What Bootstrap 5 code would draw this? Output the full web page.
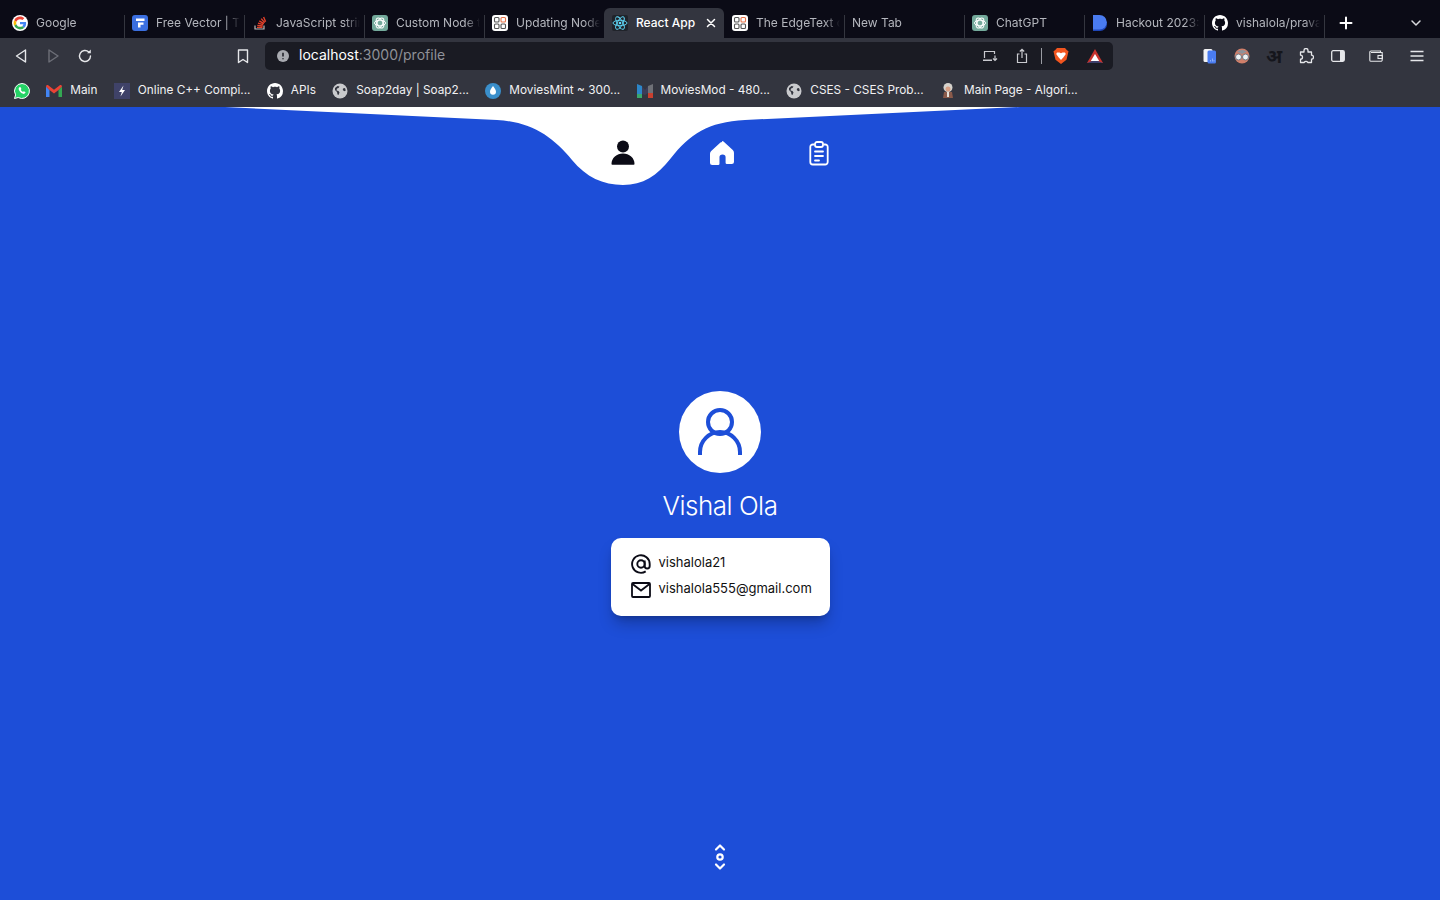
<!DOCTYPE html>
<html lang="en">
<head>
    <meta charset="UTF-8">
    <meta name="viewport" content="width=device-width, initial-scale=1.0">
    <title>React App</title>
    <link rel="stylesheet" href="https://cdn.jsdelivr.net/npm/bootstrap@5.3.0/dist/css/bootstrap.min.css">
    <style>
        html, body { height: 100%; overflow: hidden; }
        body { font-family: Inter, "Liberation Sans", sans-serif; background: #1d4ed8; }

        /* browser chrome */
        .tab-strip { height: 38px; background: #0b0b16; padding-left: 4px; }
        .tab-item { width: 120px; height: 30px; margin-top: 8px; padding: 0 4px 0 8px; font-size: 12px; color: #b4b6bd; position: relative; }
        .tab-item::after { content: ""; position: absolute; right: -1px; top: 7px; bottom: 0; width: 1px; background: #34363f; }
        .tab-item.tab-active { background: #33353f; color: #fff; font-weight: 500; border-radius: 6px 6px 0 0; }
        .tab-item.tab-active::after { display: none; }
        .tab-title { white-space: nowrap; overflow: hidden; flex: 1; -webkit-mask-image: linear-gradient(to right, #000 82%, transparent 100%); mask-image: linear-gradient(to right, #000 82%, transparent 100%); }
        .tab-active .tab-title { -webkit-mask-image: none; mask-image: none; }
        .tab-tools { color: #fff; }
        .tab-plus { width: 44px; }
        .tab-more { margin-left: 26px; width: 44px; }

        .tool-row { height: 36px; background: #33353f; padding-left: 5px; }
        .tool-slot { width: 32px; height: 28px; flex: none; }
        .tool-left { width: 260px; }
        .tool-mark { margin-left: auto; margin-right: 12px; width: 16px; }
        .addr-bar { width: 848px; height: 28px; background: #1a1b23; border-radius: 5px; color: #8f9198; font-size: 14px; line-height: 26px; padding-left: 12px; }
        .addr-text { margin-left: 2px; padding-bottom: 2px; }
        .addr-host { color: #fff; }
        .addr-sep { width: 1px; height: 16px; background: #9a9ca3; margin: 0 3px; }
        .addr-tools { margin-right: 2px; }
        .addr-last { margin-left: 2px; }
        .tool-right { margin-left: 81px; }
        .tool-hindi { font-family: "DejaVu Sans", "Noto Sans", sans-serif; font-size: 19px; font-weight: 700; color: #15161c; }
        .tool-wallet { margin-left: 6px; }
        .tool-menu { margin-left: 9px; }

        .mark-row { height: 33px; background: #33353f; padding-left: 14px; gap: 16.35px; font-size: 11.8px; color: #f1f1f3; }
        .mark-item { gap: 8px; white-space: nowrap; }

        /* page */
        .app-page { height: 793px; background: #1d4ed8; position: relative; color: #fff; }
        .wave-shape { position: absolute; left: 0; top: 0; }
        .app-nav { height: 78px; padding-top: 32px; padding-left: 2px; position: relative; gap: 70px; }
        .app-nav svg { display: block; }
        .avatar-circle { width: 82px; height: 82px; border-radius: 50%; background: #fff; }
        .profile-name { font-size: 26px; font-weight: 300; letter-spacing: -.02em; line-height: 34px; margin: 16px 0 15px; }
        .info-box { width: 219px; height: 78px; background: #fff; color: #111; border-radius: 10px; font-size: 13px; padding: 12px 0 0 20px; box-shadow: 0 10px 15px -3px rgba(0,0,0,.25), 0 4px 6px -4px rgba(0,0,0,.25); }
        .info-line { height: 26px; gap: 8px; }
        .info-icon { width: 20px; flex: none; margin-top: 2px; }
        .app-foot { height: 78px; padding-top: 21px; }
    </style>
</head>
<body>
    <svg width="0" height="0" class="position-absolute">
        <defs>
            <symbol id="fav-gpt" viewBox="0 0 16 16">
                <rect width="16" height="16" rx="3" fill="#74aa9c"/>
                <g fill="none" stroke="#fff" stroke-width="1">
                    <ellipse cx="8" cy="8" rx="5.5" ry="2.8"/>
                    <ellipse cx="8" cy="8" rx="5.5" ry="2.8" transform="rotate(60 8 8)"/>
                    <ellipse cx="8" cy="8" rx="5.5" ry="2.8" transform="rotate(120 8 8)"/>
                </g>
            </symbol>
            <symbol id="fav-grid" viewBox="0 0 16 16">
                <rect width="16" height="16" rx="3" fill="#fff"/>
                <g fill="none" stroke="#555" stroke-width="1.1">
                    <rect x="2.5" y="2.5" width="4.5" height="4.5" rx="1"/>
                    <rect x="2.5" y="9" width="4.5" height="4.5" rx="1"/>
                    <rect x="9" y="9" width="4.5" height="4.5" rx="1"/>
                </g>
                <rect x="9" y="2.5" width="4.5" height="4.5" rx="1" fill="none" stroke="#e8744a" stroke-width="1.1"/>
            </symbol>
            <symbol id="fav-github" viewBox="0 0 16 16">
                <path fill="#fff" d="M8 0C3.58 0 0 3.58 0 8c0 3.54 2.29 6.53 5.47 7.59.4.07.55-.17.55-.38 0-.19-.01-.82-.01-1.49-2.01.37-2.53-.49-2.69-.94-.09-.23-.48-.94-.82-1.13-.28-.15-.68-.52-.01-.53.63-.01 1.08.58 1.23.82.72 1.21 1.87.87 2.33.66.07-.52.28-.87.51-1.07-1.78-.2-3.64-.89-3.64-3.95 0-.87.31-1.59.82-2.15-.08-.2-.36-1.02.08-2.12 0 0 .67-.21 2.2.82.64-.18 1.32-.27 2-.27.68 0 1.36.09 2 .27 1.53-1.04 2.2-.82 2.2-.82.44 1.1.16 1.92.08 2.12.51.56.82 1.27.82 2.15 0 3.07-1.87 3.75-3.65 3.95.29.25.54.73.54 1.48 0 1.07-.01 1.93-.01 2.2 0 .21.15.46.55.38A8.013 8.013 0 0016 8c0-4.42-3.58-8-8-8z"/>
            </symbol>
            <symbol id="fav-globe" viewBox="0 0 16 16">
                <circle cx="8" cy="8" r="7.5" fill="#c9cacd"/>
                <path fill="#33353f" d="M3 5l2.500-2 2 .5-1 1.500-1.500.5-.5 2 2 .5 1 1.500-1 2.500-1-.5-.5-2.500-2-2zM11 5.500l2-.5.8 2.500-1.500.8-1.500-1.300z"/>
            </symbol>
        </defs>
    </svg>

    <!-- tab strip -->
    <div class="tab-strip d-flex">
        <div class="tab-item d-flex align-items-center gap-2">
            <svg width="16" height="16" viewBox="-6 -6 60 60" class="flex-shrink-0"><circle cx="24" cy="24" r="30" fill="#fff"/><path fill="#EA4335" d="M24 9.5c3.54 0 6.71 1.22 9.21 3.6l6.85-6.85C35.9 2.38 30.47 0 24 0 14.62 0 6.51 5.38 2.56 13.22l7.98 6.19C12.43 13.72 17.74 9.5 24 9.5z"/><path fill="#4285F4" d="M46.98 24.55c0-1.57-.15-3.09-.38-4.55H24v9.02h12.94c-.58 2.96-2.26 5.48-4.78 7.18l7.73 6c4.51-4.18 7.09-10.36 7.09-17.65z"/><path fill="#FBBC05" d="M10.53 28.59c-.48-1.45-.76-2.99-.76-4.59s.27-3.14.76-4.59l-7.98-6.19C.92 16.46 0 20.12 0 24c0 3.88.92 7.54 2.56 10.78l7.97-6.19z"/><path fill="#34A853" d="M24 48c6.48 0 11.93-2.13 15.89-5.81l-7.73-6c-2.15 1.45-4.92 2.3-8.16 2.3-6.26 0-11.57-4.22-13.47-9.91l-7.98 6.19C6.51 42.62 14.62 48 24 48z"/></svg>
            <span class="tab-title">Google</span>
        </div>
        <div class="tab-item d-flex align-items-center gap-2">
            <svg width="16" height="16" viewBox="0 0 16 16" class="flex-shrink-0"><rect width="16" height="16" rx="3" fill="#3b6fe0"/><path fill="#fff" d="M4 3.500h8.500v2.600H4zM6 7.400h5.500v2.300H8.500V12.500H6z"/></svg>
            <span class="tab-title">Free Vector | Te</span>
        </div>
        <div class="tab-item d-flex align-items-center gap-2">
            <svg width="16" height="16" viewBox="0 0 16 16" class="flex-shrink-0"><path fill="none" stroke="#bcbbbb" stroke-width="1.2" d="M3 10.5v3.500h9v-3.500"/><path fill="none" stroke="#e2412a" stroke-width="1.4" d="M5 12.400h5.500M5.300 10.400l5.400.6M6 8.200l5.200 1.500M7.300 5.800l4.600 2.900M9.200 3.600l3.500 4M11.600 2l2 4.800"/></svg>
            <span class="tab-title">JavaScript strin</span>
        </div>
        <div class="tab-item d-flex align-items-center gap-2">
            <svg width="16" height="16" class="flex-shrink-0"><use href="#fav-gpt"/></svg>
            <span class="tab-title">Custom Node t</span>
        </div>
        <div class="tab-item d-flex align-items-center gap-2">
            <svg width="16" height="16" class="flex-shrink-0"><use href="#fav-grid"/></svg>
            <span class="tab-title">Updating Node</span>
        </div>
        <div class="tab-item tab-active d-flex align-items-center gap-2">
            <svg width="16" height="16" viewBox="0 0 16 16" class="flex-shrink-0"><rect width="16" height="16" rx="2" fill="#20232a"/><g fill="none" stroke="#61dafb" stroke-width=".9"><ellipse cx="8" cy="8" rx="7" ry="2.7"/><ellipse cx="8" cy="8" rx="7" ry="2.7" transform="rotate(60 8 8)"/><ellipse cx="8" cy="8" rx="7" ry="2.7" transform="rotate(120 8 8)"/></g><circle cx="8" cy="8" r="1.3" fill="#61dafb"/></svg>
            <span class="tab-title">React App</span>
            <svg width="10" height="10" viewBox="0 0 10 10" class="flex-shrink-0 me-1"><path d="M1.500 1.500l7 7M8.500 1.500l-7 7" stroke="#fff" stroke-width="1.500" stroke-linecap="round"/></svg>
        </div>
        <div class="tab-item d-flex align-items-center gap-2">
            <svg width="16" height="16" class="flex-shrink-0"><use href="#fav-grid"/></svg>
            <span class="tab-title">The EdgeText c</span>
        </div>
        <div class="tab-item d-flex align-items-center">
            <span class="tab-title">New Tab</span>
        </div>
        <div class="tab-item d-flex align-items-center gap-2">
            <svg width="16" height="16" class="flex-shrink-0"><use href="#fav-gpt"/></svg>
            <span class="tab-title">ChatGPT</span>
        </div>
        <div class="tab-item d-flex align-items-center gap-2">
            <svg width="16" height="16" viewBox="0 0 16 16" class="flex-shrink-0"><path fill="#1f46b8" d="M1 2h7a7 7 0 010 14H1z"/><path fill="#4a7cf0" d="M1 0h6.500a7 7 0 010 14.500H1z"/></svg>
            <span class="tab-title">Hackout 2023:</span>
        </div>
        <div class="tab-item d-flex align-items-center gap-2">
            <svg width="16" height="16" class="flex-shrink-0"><use href="#fav-github"/></svg>
            <span class="tab-title">vishalola/prava</span>
        </div>
        <div class="tab-tools d-flex align-items-center mt-2">
            <div class="tab-plus d-flex justify-content-center"><svg width="14" height="14" viewBox="0 0 14 14"><path d="M7 1.500v11M1.500 7h11" stroke="#fff" stroke-width="2" stroke-linecap="round"/></svg></div>
            <div class="tab-more d-flex justify-content-center"><svg width="12" height="8" viewBox="0 0 12 8"><path d="M2 2l4 4 4-4" fill="none" stroke="#d9dade" stroke-width="1.500" stroke-linecap="round" stroke-linejoin="round"/></svg></div>
        </div>
    </div>

    <!-- toolbar -->
    <div class="tool-row d-flex align-items-center">
        <div class="tool-left d-flex align-items-center">
            <div class="tool-slot d-flex align-items-center justify-content-center"><svg width="14" height="16" viewBox="0 0 14 16"><path d="M11.500 2v12L2.500 8z" fill="none" stroke="#e6e7ea" stroke-width="1.400" stroke-linejoin="round"/></svg></div>
            <div class="tool-slot d-flex align-items-center justify-content-center"><svg width="14" height="16" viewBox="0 0 14 16"><path d="M3 2v12l9-6z" fill="none" stroke="#6d6f78" stroke-width="1.400" stroke-linejoin="round"/></svg></div>
            <div class="tool-slot d-flex align-items-center justify-content-center"><svg width="16" height="16" viewBox="0 0 16 16"><path d="M13.500 8a5.500 5.500 0 11-1.700-4" fill="none" stroke="#e6e7ea" stroke-width="1.400" stroke-linecap="round"/><path d="M13.800 1.500v3.700h-3.700z" fill="#e6e7ea"/></svg></div>
            <div class="tool-mark d-flex"><svg width="12" height="15" viewBox="0 0 12 15"><path d="M1.500 1h9v12.500L6 10.500l-4.500 3z" fill="none" stroke="#e6e7ea" stroke-width="1.400" stroke-linejoin="round"/></svg></div>
        </div>
        <div class="addr-bar d-flex align-items-center">
            <svg width="12" height="12" viewBox="0 0 12 12" class="me-2 flex-shrink-0"><circle cx="6" cy="6" r="6" fill="#a9abb1"/><path d="M6 2.800v3.800M6 8.200v1" stroke="#1a1b23" stroke-width="1.500"/></svg>
            <span class="addr-text"><span class="addr-host">localhost</span>:3000/profile</span>
            <div class="ms-auto d-flex align-items-center addr-tools">
                <div class="tool-slot d-flex align-items-center justify-content-center"><svg width="16" height="14" viewBox="0 0 16 14"><path d="M2.500 9V2.500h10V5" fill="none" stroke="#c9cacf" stroke-width="1.200"/><path d="M1 10.500h9v1.500H1z" fill="#c9cacf"/><path d="M13 6.500v4.500M11 9.500l2 2 2-2" fill="none" stroke="#c9cacf" stroke-width="1.200"/></svg></div>
                <div class="tool-slot d-flex align-items-center justify-content-center"><svg width="12" height="16" viewBox="0 0 12 16"><path d="M3.500 6H1.500v8.500h9V6h-2M6 10V1.500M3.800 3.500L6 1.300l2.200 2.200" fill="none" stroke="#c9cacf" stroke-width="1.200"/></svg></div>
                <div class="addr-sep"></div>
                <div class="tool-slot d-flex align-items-center justify-content-center"><svg width="16" height="18" viewBox="0 0 16 18"><path fill="#f1551f" d="M4 1h8l2 2.200 1.500 1-.8 3.500-1.200 5L8 17l-5.500-4.300-1.200-5L.5 4.200 2 3.200z"/><path fill="#fff" d="M4 5.500h2.500L8 6.300l1.500-.8H12l.8 1.500-2.300 3.200L8 13l-2.500-2.800L3.200 7z"/></svg></div>
                <div class="tool-slot addr-last d-flex align-items-center justify-content-center"><svg width="18" height="16" viewBox="0 0 18 16"><path d="M9 1l8 14H1z" fill="#c8332d"/><path d="M9 6l4.200 7H4.800z" fill="#fff"/><path d="M1 15l5-2h6l5 2z" fill="#3b3f6b"/></svg></div>
            </div>
        </div>
        <div class="tool-right d-flex align-items-center">
            <div class="tool-slot d-flex align-items-center justify-content-center"><svg width="14" height="16" viewBox="0 0 14 16"><rect x="0.500" y="1" width="9" height="13" rx="1.500" fill="#f2f2f4"/><rect x="4.500" y="2.500" width="8.500" height="13" rx="1.500" fill="#4a7cf0"/><path d="M7.500 12v1.500M9.500 10.500v3M11 12v1.500" stroke="#9fbcf7" stroke-width=".8"/></svg></div>
            <div class="tool-slot d-flex align-items-center justify-content-center"><svg width="16" height="16" viewBox="0 0 16 16"><circle cx="8" cy="8" r="7.500" fill="#d07f6a"/><circle cx="4.500" cy="9" r="3" fill="#eef3f5" stroke="#6f7680"/><circle cx="11.500" cy="9" r="3" fill="#eef3f5" stroke="#6f7680"/><path d="M3 3.500q5-3 10 0L8 6z" fill="#8d929b"/></svg></div>
            <div class="tool-slot d-flex align-items-center justify-content-center tool-hindi">अ</div>
            <div class="tool-slot d-flex align-items-center justify-content-center"><svg width="16" height="16" viewBox="0 0 16 16"><path d="M6 2.500a2 2 0 014 0V4h3.500v3.200a2 2 0 010 4V14.500H9.800a2 2 0 00-3.600 0H2.500v-3.300a2 2 0 000-4V4H6z" fill="none" stroke="#e6e7ea" stroke-width="1.300" stroke-linejoin="round"/></svg></div>
            <div class="tool-slot d-flex align-items-center justify-content-center"><svg width="14" height="12" viewBox="0 0 14 12"><rect x=".7" y=".7" width="12.600" height="10.600" rx="1.500" fill="none" stroke="#e6e7ea" stroke-width="1.300"/><rect x="9" y="1" width="4" height="10" fill="#e6e7ea"/></svg></div>
            <div class="tool-slot tool-wallet d-flex align-items-center justify-content-center"><svg width="14" height="12" viewBox="0 0 14 12"><path d="M11.500 2.500V1H2a1.200 1.200 0 00-1.200 1.200v8A1.200 1.200 0 002 11.300h10a1.200 1.200 0 001.200-1.200V2.500H2" fill="none" stroke="#e6e7ea" stroke-width="1.100"/><rect x="9" y="5.500" width="4.500" height="3" fill="none" stroke="#e6e7ea" stroke-width="1.100"/></svg></div>
            <div class="tool-slot tool-menu d-flex align-items-center justify-content-center"><svg width="14" height="12" viewBox="0 0 14 12"><path d="M.5 1.500h13M.5 6h13M.5 10.500h13" stroke="#e6e7ea" stroke-width="1.300"/></svg></div>
        </div>
    </div>

    <!-- bookmarks -->
    <div class="mark-row d-flex align-items-center">
        <div class="mark-item d-flex align-items-center">
            <svg width="16" height="16" viewBox="0 0 16 16"><path d="M8 .500a7.500 7.500 0 00-6.400 11.400L.5 15.500l3.700-1A7.500 7.500 0 108 .500z" fill="#25d366" stroke="#fff"/><path d="M5.300 4.300c-1 1-.8 2.600.6 4.300 1.500 1.800 3.500 2.800 4.700 2 .8-.5 1-1.100.8-1.500l-1.700-.9-.7.700c-.9-.3-1.800-1.300-2.200-2.200l.6-.7-.7-1.700c-.4-.2-.9-.2-1.400 0z" fill="#fff"/></svg>
        </div>
        <div class="mark-item d-flex align-items-center">
            <svg width="16" height="12" viewBox="0 0 16 12"><path d="M0 1.500V12h3.500V5z" fill="#4285f4"/><path d="M16 1.500V12h-3.500V5z" fill="#34a853"/><path d="M0 1.500C0 .2 1.500-.4 2.500.4L8 4.800 13.500.4c1-.8 2.500-.2 2.500 1.100L12.500 5 8 8.500 3.500 5z" fill="#ea4335"/></svg>
            <span>Main</span>
        </div>
        <div class="mark-item d-flex align-items-center">
            <svg width="16" height="16" viewBox="0 0 16 16"><rect width="16" height="16" fill="#3f4268"/><path d="M9.500 2.500L5 9h2.800L6.500 13.500 11 7H8.200z" fill="#fff"/></svg>
            <span>Online C++ Compi...</span>
        </div>
        <div class="mark-item d-flex align-items-center">
            <svg width="16" height="16"><use href="#fav-github"/></svg>
            <span>APIs</span>
        </div>
        <div class="mark-item d-flex align-items-center">
            <svg width="16" height="16"><use href="#fav-globe"/></svg>
            <span>Soap2day | Soap2...</span>
        </div>
        <div class="mark-item d-flex align-items-center">
            <svg width="16" height="16" viewBox="0 0 16 16"><circle cx="8" cy="8" r="8" fill="#3a8fcb"/><path d="M8 3c-1.500 2.300-3 3.800-3 5.800a3 3 0 006 0C11 6.800 9.500 5.300 8 3z" fill="#fff"/></svg>
            <span>MoviesMint ~ 300...</span>
        </div>
        <div class="mark-item d-flex align-items-center">
            <svg width="16" height="16" viewBox="0 0 16 16"><path d="M0 1l5 2v8H0z" fill="#2c86c9"/><path d="M0 11h5v4H0z" fill="#3aa76d"/><path d="M11 3l5-2v9h-5z" fill="#6f7177"/><path d="M5 3l3 4 3-4v7L8 12l-3-1z" fill="#3b3d58"/><path d="M11 10h5v5h-5z" fill="#c9402f"/></svg>
            <span>MoviesMod - 480...</span>
        </div>
        <div class="mark-item d-flex align-items-center">
            <svg width="16" height="16"><use href="#fav-globe"/></svg>
            <span>CSES - CSES Prob...</span>
        </div>
        <div class="mark-item d-flex align-items-center">
            <svg width="16" height="16" viewBox="0 0 16 16"><circle cx="8" cy="4.500" r="4.500" fill="#d5d2cc"/><circle cx="8" cy="6" r="2.500" fill="#d89f84"/><path d="M4 9h8l1 6H3z" fill="#8a5a4a"/><path d="M7 9h2v5H7z" fill="#e5e2da"/></svg>
            <span>Main Page - Algori...</span>
        </div>
    </div>

    <!-- app -->
    <main class="app-page d-flex flex-column">
        <svg class="wave-shape" width="1440" height="80" viewBox="0 107 1440 80">
            <path fill="#fff" d="M225 107 L497 120 C532 122 553 137 572 160 C586 177 603 185 623 185 C643 185 657 176 671 158 C690 134 708 122 745 120 L1020 107 Z"/>
        </svg>
        <nav class="app-nav d-flex justify-content-center">
            <svg width="28" height="28" viewBox="0 0 28 28"><circle cx="14" cy="7.500" r="6" fill="#0b0b16"/><path d="M2.500 25a11.500 10.500 0 0123 0 .8.800 0 01-.8.800H3.300a.8.800 0 01-.8-.8z" fill="#0b0b16"/></svg>
            <svg width="28" height="28" viewBox="0 0 28 28"><path transform="matrix(1.090 0 0 .98 -.27 -.45)" fill="#fff" d="M14 2.500c.5 0 1 .2 1.400.6l8.500 8.700c.7.7 1.100 1.600 1.100 2.600v9.600a2 2 0 01-2 2h-4.500a1.200 1.200 0 01-1.200-1.200V19a2.800 2.800 0 00-5.600 0v6.800a1.200 1.200 0 01-1.200 1.200H5a2 2 0 01-2-2v-9.600c0-1 .4-1.900 1.100-2.600l8.500-8.700c.4-.4.900-.6 1.400-.6z"/></svg>
            <svg width="28" height="28" viewBox="0 0 28 28"><path d="M9.500 5.500H7.800a2.500 2.500 0 00-2.500 2.500v15a2.500 2.500 0 002.500 2.500h12.400a2.500 2.500 0 002.500-2.500V8a2.500 2.500 0 00-2.500-2.500h-1.700" fill="none" stroke="#fff" stroke-width="1.800"/><rect x="10" y="3" width="8" height="5" rx="2" fill="none" stroke="#fff" stroke-width="1.800"/><path d="M10 12.500h8M10 17h8M10 21.500h4" stroke="#fff" stroke-width="1.800" stroke-linecap="round"/></svg>
        </nav>
        <section class="flex-grow-1 d-flex flex-column align-items-center justify-content-center">
            <div class="avatar-circle d-flex align-items-center justify-content-center">
                <svg width="48" height="48" viewBox="0 0 48 48"><circle cx="24" cy="14" r="12" fill="none" stroke="#1d4ed8" stroke-width="4"/><path d="M4 47V44A20 20 0 0144 44V47" fill="none" stroke="#1d4ed8" stroke-width="4"/></svg>
            </div>
            <h1 class="profile-name">Vishal Ola</h1>
            <div class="info-box">
                <div class="info-line d-flex align-items-center">
                    <svg class="info-icon" width="20" height="20" viewBox="0 0 20 20"><circle cx="10" cy="10" r="3.700" fill="none" stroke="#0b0b16" stroke-width="1.900"/><path d="M13.700 6.500v5.500a2.500 2.500 0 005 0V10a8.800 8.800 0 10-4 7.400" fill="none" stroke="#0b0b16" stroke-width="1.900"/></svg>
                    <span>vishalola21</span>
                </div>
                <div class="info-line d-flex align-items-center">
                    <svg class="info-icon" width="20" height="16" viewBox="0 0 20 16"><rect x="1" y="1" width="18" height="14" rx="1" fill="none" stroke="#0b0b16" stroke-width="1.800"/><path d="M1.500 2l8.500 6.500L18.500 2" fill="none" stroke="#0b0b16" stroke-width="1.800"/></svg>
                    <span>vishalola555@gmail.com</span>
                </div>
            </div>
        </section>
        <footer class="app-foot d-flex justify-content-center">
            <svg width="14" height="28" viewBox="0 0 14 28"><path d="M3 6.500l4-4 4 4M3 21.500l4 4 4-4" fill="none" stroke="#fff" stroke-width="2.200" stroke-linecap="round" stroke-linejoin="round"/><circle cx="7" cy="14" r="2.700" fill="none" stroke="#fff" stroke-width="2.200"/></svg>
        </footer>
    </main>

    <script src="https://cdn.jsdelivr.net/npm/bootstrap@5.3.0/dist/js/bootstrap.bundle.min.js"></script>
</body>
</html>
